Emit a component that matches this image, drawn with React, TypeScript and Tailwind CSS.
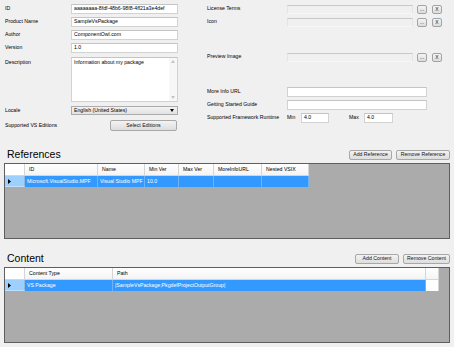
import React from "react";

const F = "font-['Liberation_Sans',Arial,sans-serif]";

function TextBox({ w, h = 10, text = "", disabled = false }: { w: number; h?: number; text?: string; disabled?: boolean }) {
  return (
    <div
      className={
        disabled
          ? "border-t border-t-[#C9C9C9] border-x border-x-[#E4E4E4] border-b border-b-[#F7F7F7] bg-[#F0F0F0]"
          : "border border-[#D2D2D2] border-t-[#C4C4C4] bg-white flex items-center pl-[2px] text-[5.2px] text-black leading-none whitespace-nowrap overflow-hidden"
      }
      style={{ width: w, height: h }}
    >
      {text}
    </div>
  );
}

function SmallBtn({ label }: { label: string }) {
  return (
    <div className="w-[10px] h-[9px] border border-[#A3A3A3] rounded-[2px] bg-gradient-to-b from-[#F4F4F4] to-[#DCDCDC] flex items-center justify-center text-[5px] leading-none text-[#222]">
      {label}
    </div>
  );
}

function Btn({ label, w, h = 10 }: { label: string; w: number; h?: number }) {
  return (
    <div
      className="border border-[#A8A8A8] rounded-[2px] bg-gradient-to-b from-[#F3F3F3] to-[#DDDDDD] flex items-center justify-center text-[5.2px] leading-none text-[#111] whitespace-nowrap"
      style={{ width: w, height: h }}
    >
      {label}
    </div>
  );
}

function Label({ children, w }: { children: React.ReactNode; w: number }) {
  return (
    <div className="text-[5.2px] leading-none text-black whitespace-nowrap" style={{ width: w }}>
      {children}
    </div>
  );
}

function RowHeaderCell({ selected }: { selected?: boolean }) {
  return (
    <div
      className={
        selected
          ? "w-[20px] h-full bg-[#9ED0FF] border-r border-r-[#8FB8E0] border-b border-b-[#BFDFFF] flex items-center pl-[3px]"
          : "w-[20px] h-full bg-white border-r border-r-[#D5D5D5] border-b border-b-[#D5D5D5]"
      }
    >
      {selected && (
        <svg width="3" height="5" viewBox="0 0 3 5">
          <path d="M0 0 L3 2.5 L0 5 Z" fill="#000" />
        </svg>
      )}
    </div>
  );
}

function Grid({ cols, row, extra }: { cols: { name: string; w: number }[]; row: string[]; extra?: boolean }) {
  return (
    <div className="mx-[4px] h-[76px] border border-[#5E5E5E] bg-[#ABABAB] flex flex-col">
      <div className="flex h-[12px]">
        <RowHeaderCell />
        {cols.map((c) => (
          <div
            key={c.name}
            className="h-full bg-gradient-to-b from-white to-[#F4F4F4] border-r border-r-[#D5D5D5] border-b border-b-[#D5D5D5] flex items-center pl-[4px] text-[5.2px] leading-none text-black whitespace-nowrap overflow-hidden"
            style={{ width: c.w }}
          >
            {c.name}
          </div>
        ))}
        {extra && <div className="w-[13px] h-full bg-gradient-to-b from-white to-[#F4F4F4] border-b border-b-[#D5D5D5] border-r border-r-[#D5D5D5]" />}
      </div>
      <div className="flex h-[11px]">
        <RowHeaderCell selected />
        {cols.map((c, i) => (
          <div
            key={c.name}
            className="h-full bg-[#3399FF] border-r border-r-[#6FB3F7] flex items-center pl-[2px] text-[5.2px] leading-none text-white whitespace-nowrap overflow-hidden"
            style={{ width: c.w }}
          >
            {row[i] ?? ""}
          </div>
        ))}
        {extra && <div className="w-[13px] h-full bg-white border-r border-r-[#D5D5D5]" />}
      </div>
    </div>
  );
}

export default function App() {
  return (
    <div className={`${F} w-[454px] h-[347px] bg-[#F0F0F0] overflow-hidden flex flex-col`}>
      {/* top */}
      <div className="flex h-[140px]">
        {/* left column */}
        <div className="w-[190px] pl-[5px] pt-[4px] flex flex-col">
          <div className="flex items-center h-[10px]">
            <Label w={66}>ID</Label>
            <TextBox w={107} text="aaaaaaaa-8fdf-48b6-98f8-4ff21a3e4def" />
          </div>
          <div className="flex items-center h-[10px] mt-[3px]">
            <Label w={66}>Product Name</Label>
            <TextBox w={107} text="SampleVsPackage" />
          </div>
          <div className="flex items-center h-[10px] mt-[3px]">
            <Label w={66}>Author</Label>
            <TextBox w={107} text="ComponentOwl.com" />
          </div>
          <div className="flex items-center h-[10px] mt-[3px]">
            <Label w={66}>Version</Label>
            <TextBox w={107} text="1.0" />
          </div>
          <div className="flex items-start h-[45px] mt-[4px]">
            <div className="pt-[3px]">
              <Label w={66}>Description</Label>
            </div>
            <div className="w-[107px] h-[45px] border border-[#D2D2D2] border-t-[#C4C4C4] bg-white flex">
              <div className="flex-1 pl-[2px] pt-[2px] text-[5.2px] leading-none text-black whitespace-nowrap">
                Information about my package
              </div>
              <div className="w-[8px] h-full bg-[#F7F7F7] flex flex-col items-center justify-between py-[2px]">
                <svg width="4" height="3" viewBox="0 0 4 3"><path d="M0 3 L2 0 L4 3 Z" fill="#C4C4C4" /></svg>
                <svg width="4" height="3" viewBox="0 0 4 3"><path d="M0 0 L2 3 L4 0 Z" fill="#C4C4C4" /></svg>
              </div>
            </div>
          </div>
          <div className="flex items-center h-[9px] mt-[4px]">
            <Label w={66}>Locale</Label>
            <div className="w-[107px] h-[9px] border border-[#ACACAC] bg-gradient-to-b from-[#F2F2F2] to-[#E2E2E2] flex items-center justify-between pl-[2px] pr-[3px] text-[5.2px] leading-none text-black">
              <span>English (United States)</span>
              <svg width="4" height="3" viewBox="0 0 4 3"><path d="M0 0 L2 3 L4 0 Z" fill="#000" /></svg>
            </div>
          </div>
          <div className="flex items-center h-[11px] mt-[5px]">
            <Label w={105}>Supported VS Editions</Label>
            <Btn label="Select Editions" w={67} h={11} />
          </div>
        </div>
        {/* right column */}
        <div className="flex-1 pl-[17px] pt-[4px] flex flex-col">
          <div className="flex items-center h-[10px]">
            <Label w={80}>License Terms</Label>
            <TextBox w={126} h={9} disabled />
            <div className="ml-[4px]"><SmallBtn label="..." /></div>
            <div className="ml-[5px]"><SmallBtn label="X" /></div>
          </div>
          <div className="flex items-center h-[10px] mt-[3px]">
            <Label w={80}>Icon</Label>
            <TextBox w={126} h={9} disabled />
            <div className="ml-[4px]"><SmallBtn label="..." /></div>
            <div className="ml-[5px]"><SmallBtn label="X" /></div>
          </div>
          <div className="flex items-center h-[10px] mt-[25px]">
            <Label w={80}>Preview Image</Label>
            <TextBox w={126} h={9} disabled />
            <div className="ml-[4px]"><SmallBtn label="..." /></div>
            <div className="ml-[5px]"><SmallBtn label="X" /></div>
          </div>
          <div className="flex items-center h-[10px] mt-[25px]">
            <Label w={80}>More Info URL</Label>
            <TextBox w={140} />
          </div>
          <div className="flex items-center h-[10px] mt-[3px]">
            <Label w={80}>Getting Started Guide</Label>
            <TextBox w={140} />
          </div>
          <div className="flex items-center h-[10px] mt-[3px]">
            <Label w={80}>Supported Framework Runtime</Label>
            <Label w={14}>Min</Label>
            <TextBox w={28} text="4.0" />
            <div className="ml-[20px]"><Label w={15}>Max</Label></div>
            <TextBox w={29} text="4.0" />
          </div>
        </div>
      </div>

      {/* References header */}
      <div className="flex items-end justify-between h-[23px] px-[4px]">
        <div className="pl-[3px] text-[10.5px] leading-none text-black mb-[4px]">References</div>
        <div className="flex gap-[4px] mb-[3px]">
          <Btn label="Add Reference" w={43} />
          <Btn label="Remove Reference" w={54} />
        </div>
      </div>
      <Grid
        cols={[
          { name: "ID", w: 73 },
          { name: "Name", w: 47 },
          { name: "Min Ver", w: 34 },
          { name: "Max Ver", w: 35 },
          { name: "MoreInfoURL", w: 48 },
          { name: "Nested VSIX", w: 47 },
        ]}
        row={["Microsoft.VisualStudio.MPF", "Visual Studio MPF", "10.0", "", "", ""]}
      />

      {/* Content header */}
      <div className="flex items-end justify-between h-[28px] px-[4px]">
        <div className="pl-[3px] text-[10.5px] leading-none text-black mb-[4px]">Content</div>
        <div className="flex gap-[4px] mb-[3px]">
          <Btn label="Add Content" w={44} />
          <Btn label="Remove Content" w={47} />
        </div>
      </div>
      <Grid
        cols={[
          { name: "Content Type", w: 88 },
          { name: "Path", w: 313 },
        ]}
        row={["VS Package", "|SampleVsPackage;PkgdefProjectOutputGroup|"]}
        extra
      />
    </div>
  );
}
